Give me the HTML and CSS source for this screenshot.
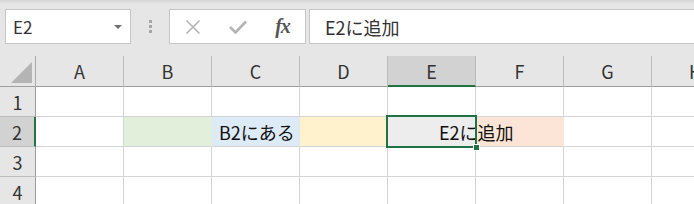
FILE: index.html
```html
<!DOCTYPE html>
<html lang="ja">
<head>
    <meta charset="UTF-8">
    <title>Sheet</title>
    <link rel="stylesheet" href="styles.css">
</head>
<body>
<div class="toolbar">
    <div class="namebox">
        <span>E2</span>
        <svg class="arrow" width="8" height="4" viewBox="0 0 8 4"><path d="M0 0H8L4 4Z" fill="#707070"/></svg>
    </div>
    <div class="grip"><i></i><i></i><i></i></div>
    <div class="fxbox">
        <span class="btn">
            <svg width="16" height="16" viewBox="0 0 16 16"><path d="M1.5 1.5L14.5 14.5M14.5 1.5L1.5 14.5" stroke="#b4b4b4" stroke-width="1.6" fill="none"/></svg>
        </span>
        <span class="btn">
            <svg width="18" height="14" viewBox="0 0 18 14"><path d="M1 7L6.5 12.5L17 1.5" stroke="#b4b4b4" stroke-width="2.6" fill="none"/></svg>
        </span>
        <span class="btn fx">fx</span>
    </div>
    <div class="formula">E2に追加</div>
</div>

<div class="sheet">
    <div class="corner"><span class="tri"></span></div>
    <div class="colhead">A</div>
    <div class="colhead">B</div>
    <div class="colhead">C</div>
    <div class="colhead">D</div>
    <div class="colhead active">E</div>
    <div class="colhead">F</div>
    <div class="colhead">G</div>
    <div class="colhead">H</div>

    <div class="rowhead">1</div>
    <div class="cell"></div><div class="cell"></div><div class="cell"></div><div class="cell"></div>
    <div class="cell"></div><div class="cell"></div><div class="cell"></div><div class="cell"></div>

    <div class="rowhead active">2</div>
    <div class="cell"></div>
    <div class="cell green"></div>
    <div class="cell blue"><span class="txt">B2にある</span></div>
    <div class="cell yellow"></div>
    <div class="cell gray selected"><span class="txt e2">E2に追加</span><span class="sel"></span><span class="handle"></span></div>
    <div class="cell orange"></div>
    <div class="cell"></div><div class="cell"></div>

    <div class="rowhead">3</div>
    <div class="cell"></div><div class="cell"></div><div class="cell"></div><div class="cell"></div>
    <div class="cell"></div><div class="cell"></div><div class="cell"></div><div class="cell"></div>

    <div class="rowhead">4</div>
    <div class="cell"></div><div class="cell"></div><div class="cell"></div><div class="cell"></div>
    <div class="cell"></div><div class="cell"></div><div class="cell"></div><div class="cell"></div>
</div>
</body>
</html>
```

FILE: styles.css
```css
body{
    margin: 0;
    width: 694px;
    height: 204px;
    overflow: hidden;
    background: #e6e6e6;
    font-family: "Noto Sans CJK JP", sans-serif;
    color: #222;
}
.toolbar{
    height: 56px;
    box-sizing: border-box;
    padding: 9px 0 0 5px;
    display: flex;
    align-items: flex-start;
    background: linear-gradient(#d4d4d4, #e6e6e6 4px);
}
.namebox{
    position: relative;
    width: 126px;
    height: 35px;
    box-sizing: border-box;
    border: 1px solid #c6c6c6;
    background: #fff;
    display: flex;
    align-items: center;
    padding-left: 7px;
    font-size: 17px;
    color: #333;
}
.namebox .arrow{
    position: absolute;
    right: 8px;
    top: 15px;
}
.grip{
    width: 38px;
    height: 35px;
    display: flex;
    flex-direction: column;
    align-items: center;
    justify-content: center;
    gap: 2px;
}
.grip i{
    display: block;
    width: 3px;
    height: 3px;
    background: #a6a6a6;
}
.fxbox{
    width: 137px;
    height: 35px;
    box-sizing: border-box;
    border: 1px solid #c6c6c6;
    background: #fff;
    display: flex;
    align-items: center;
}
.btn{
    width: 45px;
    display: flex;
    justify-content: center;
    align-items: center;
}
.btn.fx{
    font: italic bold 20px/1 "Liberation Serif", serif;
    color: #555;
    letter-spacing: -1px;
    padding-bottom: 2px;
}
.formula{
    flex: 1;
    margin: 0 -10px 0 3px;
    height: 35px;
    box-sizing: border-box;
    border: 1px solid #c6c6c6;
    background: #fff;
    display: flex;
    align-items: center;
    padding-left: 15px;
    font-size: 18px;
    color: #333;
}
.sheet{
    display: grid;
    grid-template-columns: 36px repeat(8, 88px);
    grid-template-rows: 31px repeat(4, 30px);
    background: #fff;
    font-size: 18px;
}
.corner{
    background: #e6e6e6;
    border-right: 1px solid #ababab;
    border-bottom: 1px solid #9e9e9e;
    position: relative;
}
.corner .tri{
    position: absolute;
    right: 3px;
    bottom: 3px;
    width: 0;
    height: 0;
    border-left: 21px solid transparent;
    border-bottom: 21px solid #b4b4b4;
}
.colhead{
    background: #e6e6e6;
    border-right: 1px solid #bcbcbc;
    border-bottom: 1px solid #9e9e9e;
    display: flex;
    align-items: center;
    justify-content: center;
    color: #333;
}
.colhead.active{
    background: #d2d2d2;
    border-bottom: 2px solid #217346;
}
.rowhead{
    background: #e6e6e6;
    border-right: 1px solid #9e9e9e;
    border-bottom: 1px solid #bcbcbc;
    display: flex;
    align-items: center;
    justify-content: center;
    color: #333;
}
.rowhead.active{
    background: #d2d2d2;
    border-right: 2px solid #217346;
}
.cell{
    border-right: 1px solid #d4d4d4;
    border-bottom: 1px solid #d4d4d4;
    display: flex;
    align-items: center;
    white-space: nowrap;
    position: relative;
}
.green{ background: #e2efda; border-right-color: #e2efda; }
.blue{ background: #ddebf7; border-right-color: #ddebf7; }
.yellow{ background: #fff2cc; border-right-color: #fff2cc; }
.gray{ background: #ededed; }
.orange{ background: #fce4d6; border-right-color: #fce4d6; }
.txt{
    position: relative;
    z-index: 1;
    padding-left: 7px;
    color: #111;
}
.txt.e2{
    padding-left: 51px;
}
.sel{
    position: absolute;
    left: -2px;
    top: -2px;
    right: -2px;
    bottom: -2px;
    border: 2px solid #217346;
    z-index: 2;
}
.handle{
    position: absolute;
    right: -5px;
    bottom: -5px;
    width: 5px;
    height: 5px;
    background: #217346;
    border: 1px solid #fff;
    z-index: 3;
}
```
